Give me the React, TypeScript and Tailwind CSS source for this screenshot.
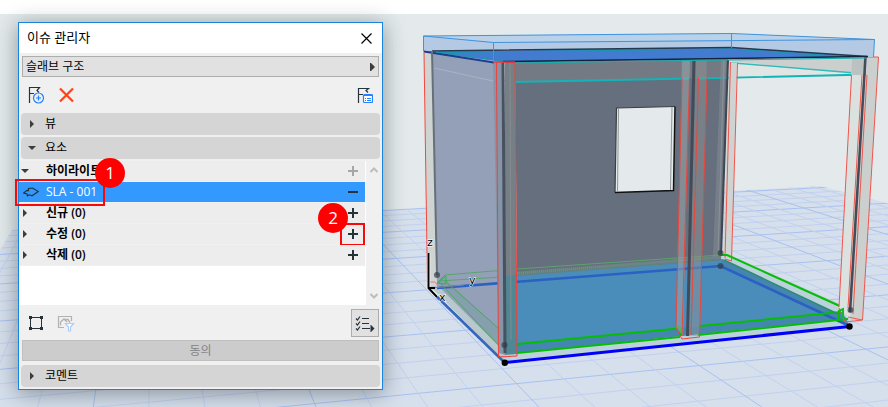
import { ReactNode } from "react";

interface RowProps {
  label: string;
  open?: boolean;
  disabled?: boolean;
  mark?: ReactNode; // callout drawn over the add button
  badge?: ReactNode;
}

const rows = ["신규 (0)", "수정 (0)", "삭제 (0)"];

// lines of the ground plane, both families run to a point on the horizon
const gridColumns = Array.from({ length: 33 }, (_, i) => ({
  x: 149 + (i - 5) * 72.4,
  major: i % 4 === 0,
}));

const gridRows = Array.from({ length: 26 }, (_, n) => {
  const y = 1 / (0.00475 - n * 0.0001115); // height of the line at x = 383
  const slope = y / 4017;
  return { left: y + slope * 583, right: y - slope * 617, major: n % 4 === 0 };
});

function Arrow({ down }: { down?: boolean }) {
  return (
    <svg className="h-2 w-2 fill-[#3c3c3c]" viewBox="0 0 8 8">
      <path d={down ? "M0 2h8L4 6z" : "M2 0l4 4-4 4z"} />
    </svg>
  );
}

function Section({ label, open }: { label: string; open?: boolean }) {
  return (
    <button
      aria-expanded={!!open}
      className="flex h-[22px] w-full items-center gap-[9px] rounded-sm bg-[#d5d5d5] px-[7px] text-left"
    >
      <Arrow down={open} />
      <span className="leading-5">{label}</span>
    </button>
  );
}

function Badge({ children }: { children: ReactNode }) {
  return (
    <span className="flex h-[30px] w-[30px] items-center justify-center rounded-full bg-[#fe0000] text-[17px] font-normal text-white">
      {children}
    </span>
  );
}

function Row({ label, open, disabled, mark, badge }: RowProps) {
  return (
    <li className="relative flex h-[21px] items-center border-b border-[#f0f0f0] bg-[#ededed] pr-[6px] pl-[2px]">
      <button aria-expanded={!!open} className="flex items-center gap-[17px] font-semibold">
        <Arrow down={open} />
        <span>{label}</span>
      </button>
      <button aria-label={`${label} 추가`} disabled={disabled} className="ml-auto">
        <svg className="h-3 w-3" viewBox="0 0 12 12">
          <path d="M1 6h10M6 1v10" stroke={disabled ? "#a3a7aa" : "#26333b"} strokeWidth="2" />
        </svg>
      </button>
      {mark}
      {badge}
    </li>
  );
}

// 3D view behind the palette
function ModelView() {
  return (
    <svg
      className="absolute inset-0 h-full w-full"
      viewBox="0 14 888 393"
      preserveAspectRatio="xMinYMin slice"
      role="img"
      aria-label="3D"
    >
      <clipPath id="ground">
        <polygon points="12,230 820,186 1400,334 1400,600 -208,600" />
      </clipPath>
      <rect y="14" width="888" height="393" fill="#e4eaeb" />
      <g clipPath="url(#ground)">
        <rect x="-210" y="180" width="1610" height="420" fill="#d6dfec" />
        {gridRows.map((r, i) => (
          <line key={i} x1="-200" y1={r.left} x2="1000" y2={r.right} stroke={r.major ? "#a9c1f0" : "#c1d1ee"} />
        ))}
        {gridColumns.map((c, i) => (
          <line key={i} x1="149" y1="0" x2={c.x} y2="529" stroke={c.major ? "#a9c1f0" : "#c1d1ee"} />
        ))}
      </g>

      {/* floor slab */}
      <polygon points="437,288 720,256 728,254 849,308 849,326 505,362" fill="#bcd2db" />
      <polygon points="437,283 505,274 722,259 846,318 505,354" fill="#4a8dbb" />
      <polygon points="517,344 842,312 846,319 517,353" fill="#4486b0" />
      <polygon points="722,259 846,318 849,326 720,266" fill="#4486b0" />

      {/* walls */}
      <polygon points="424,52 432,51 437,284 428,286" fill="#cfd4d2" />
      <polygon points="432,51 504,62 505,354 437,285" fill="#93a0b7" />
      <polygon points="438,281 443,277 516,344 505,354" fill="#7f9ea8" opacity=".7" />
      <polygon points="430,286 437,285 505,352 504,361" fill="#b8c8cd" />
      <polygon points="515,61 728,58 721,260 517,275" fill="#656f7d" />
      <polygon points="515,61 728,58 727,78 515,82" fill="#747a84" />
      <polygon points="517,272 721,256 721,260 517,276" fill="#64817f" />
      <path d="M517 273L721 257" stroke="#8a9298" strokeWidth="3" strokeDasharray="1 1" opacity=".5" />
      <polygon points="616.5,108 675,106.5 673.5,190.5 615,192.5" fill="#e4eaeb" />
      <path d="M615 192.5L616.5 108L675 106.5" fill="none" stroke="#3c3f42" strokeWidth="1.2" />
      <path d="M675 106.5L673.5 190.5L615 192.5" fill="none" stroke="#111" strokeWidth="1.5" />
      <path d="M618.5 108L617.5 192M672 107L670.5 190" stroke="#8f9494" />
      <path d="M434 68L493 81H515" fill="none" stroke="#a9b5c3" />

      {/* beam on the open side */}
      <polygon points="728,59 866,57 866,74.5 728,62" fill="#cbcfce" />
      <polygon points="728,61 866,74 866,76 728,78.5" fill="#e1e6e5" />
      <path d="M728 62.5L867 74" stroke="#35b9b9" strokeWidth="1.6" />
      <path d="M515 82L690 78.5M698.5 78.5L867 74.5" stroke="#10b5b8" strokeWidth="1.8" />

      {/* back right column */}
      <polygon points="721,60 726,60 719,256 713,257" fill="#858d94" opacity=".55" />
      <polygon points="729,62 737,63 731.5,260 723,258" fill="#cfd4d2" />
      <path d="M730.5 62L725 258M737.5 63L731.5 261L725 259" fill="none" stroke="#f2564b" />
      <path d="M728 60L721 256" stroke="#3e4652" strokeWidth="2" />
      <path d="M724 60L718 256" stroke="#8a9298" />

      {/* slab outline */}
      <path d="M437 288L720.5 266L849.5 326" fill="none" stroke="#2a61c3" strokeWidth="2.6" />
      <path d="M429 289L504 362" stroke="#3466bd" strokeWidth="2.6" />
      <path d="M504.5 362.5L849.5 326.5" stroke="#0000fa" strokeWidth="3" />
      <g fill="none" stroke="#06bd06" strokeWidth="2">
        <path d="M517 344L678 328.5M700 326L841 312" />
        <path d="M517 353L680 337M698 335L848 319" />
        <path d="M718 255H727L842 307" />
        <path d="M676 326l4 2v8M839 310v10" />
      </g>
      <path d="M724 260L838 314" stroke="#2f8b73" strokeWidth="1.5" />
      <path d="M517 269L445 275L439 281L517 276M517 269L721 255" fill="none" stroke="#5aa56c" />
      <path d="M438 281L505 352M445 281L515 343" fill="none" stroke="#4fa568" />
      <path d="M437 283l9 -7v8z" fill="none" stroke="#2fb44a" />

      {/* front left column */}
      <polygon points="493,62 503,62 505,355 499,353" fill="#8794a8" />
      <polygon points="505,62 515,62 517,343 505,343" fill="#777f86" />
      <polygon points="505,276 517,275 517,354 505,355" fill="#4f8795" />
      <path d="M503 61L505 353" stroke="#475160" strokeWidth="3" />
      <path d="M510 62L511 340" stroke="#858d91" />
      <path d="M496.5 62L498.5 357L517 356L515 62z" fill="none" stroke="#ef4238" />

      {/* middle column */}
      <polygon points="682,60 690,60 683,336 676,327" fill="#9aa5aa" opacity=".55" />
      <polygon points="696,60 707,60 700,336 688,336" fill="#8d9294" opacity=".5" />
      <path d="M694 59L687.5 336" stroke="#434b58" strokeWidth="3" />
      <path
        d="M682 78L676 327M689.5 78L682 336M698.5 78L691 335M707 78L699.5 337L682 339L676 328M690 60h16"
        fill="none"
        stroke="#e8473e"
      />

      {/* front right column */}
      <polygon points="852,58 865,57 850,320 839,307" fill="#dbe1df" />
      <polygon points="852,58 865,57 864,75 851,75" fill="#bcc2c1" />
      <polygon points="867,57 878.5,57 862.5,320 850,320" fill="#cbd0cf" />
      <path
        d="M851.5 75L839 307M862 75L848 308M867 75L853 314M866 57H878.5L862.5 320L845 322L839 308M848 317L862 320"
        fill="none"
        stroke="#f2564b"
      />
      <path d="M865.5 57L850 312" stroke="#454c59" strokeWidth="2.6" />
      <path d="M839 311l4 -2v9" fill="none" stroke="#12ba2c" strokeWidth="2" />

      {/* roof slab */}
      <polygon points="423.5,36 731.5,33.5 874.5,39.5 873.5,57 493.5,62.5 423.5,51.5" fill="#b4c9e3" />
      <polygon points="423.5,36 731.5,33.5 874.5,39.5 493.5,42.5" fill="#b9d2e9" />
      <polygon points="424,51.5 731,47.5 866,56.5 503,62" fill="#437bd0" />
      <path d="M424 51.5L494 62.5" stroke="#1b3f8f" strokeWidth="2" />
      <path d="M432 51L731 47.5L867 56.5" fill="none" stroke="#26384f" strokeWidth="1.5" />
      <path d="M436 52L503 61M440 52.5L731 49L850 57" fill="none" stroke="#1b97ac" />
      <path d="M503 61.5L868 56.5" stroke="#14233a" strokeWidth="1.5" />
      <path d="M515 63L866 58" stroke="#16afb0" />
      <path
        d="M423.5 51.5V36L731.5 33.5L874.5 39.5L873.5 57M423.5 36L493.5 42.5L874.5 39.5M493.5 42.5V62.5M731.5 33.5V48"
        fill="none"
        stroke="#4093dc"
      />
      <path d="M494 62H515" stroke="#ef2f2f" strokeWidth="1.5" />

      {/* far left column */}
      <path d="M424 52L427.5 286" stroke="#f2473d" />
      <path d="M432 51L437 275" stroke="#66707a" strokeWidth="2" />
      <path d="M428 282h7l3 4" fill="none" stroke="#f07a72" />

      <g fill="#323d48" opacity=".7">
        <circle cx="437" cy="275" r="3" />
        <circle cx="504.5" cy="345" r="3" />
        <circle cx="720.5" cy="253" r="3" />
        <circle cx="720.5" cy="266" r="3" />
        <circle cx="850.5" cy="310" r="3" />
      </g>
      <circle cx="504.8" cy="362.7" r="3.2" />
      <circle cx="849.5" cy="326.5" r="3.2" />

      {/* axes */}
      <path d="M430 288L464 285" stroke="#7d8794" />
      <path d="M428.5 253V288L437 297" fill="none" stroke="#fff" strokeWidth="3.5" />
      <path d="M428.5 253V288L437 297M429 288h6" fill="none" stroke="#000" strokeWidth="2" />
      <g className="font-['DejaVu_Sans',sans-serif] text-[11px] [paint-order:stroke]" stroke="#fff">
        <text x="427" y="246">z</text>
        <text x="469" y="284">y</text>
        <text x="439" y="301">x</text>
      </g>
    </svg>
  );
}

function IssueManager() {
  return (
    <section
      aria-label="이슈 관리자"
      className="relative w-[365px] border border-[#1a84dc] bg-[#f0f0f0] pb-[2px] shadow-[0_3px_20px_1px_rgba(20,35,40,0.4)]"
    >
      <header className="flex h-[30px] items-center justify-between bg-white pr-[10px] pl-2">
        <h1 className="text-[13px]">이슈 관리자</h1>
        <button aria-label="닫기">
          <svg className="h-[11px] w-[11px]" viewBox="0 0 11 11">
            <path d="M.5 .5l10 10M10.5 .5l-10 10" stroke="#000" strokeWidth="1.2" />
          </svg>
        </button>
      </header>

      <div className="px-[3px] pt-[3px]">
        <button
          aria-haspopup="listbox"
          className="flex h-[21px] w-full items-center justify-between border border-[#adadad] bg-[#e1e1e1] px-[3px]"
        >
          <span>슬래브 구조</span>
          <svg className="h-2 w-2 fill-[#3c3c3c]" viewBox="0 0 8 8">
            <path d="M3 0h1l4 4-4 4H3z" />
          </svg>
        </button>
      </div>

      <div className="flex h-9 items-center px-[9px]">
        <button aria-label="새 이슈">
          <svg className="h-[18px] w-[18px]" viewBox="0 0 18 18" fill="none">
            <path d="M1.5 17V1.5H11.5L9 4.5L11 6.5M1.5 7.5H6" stroke="#26333b" strokeWidth="1.2" />
            <circle cx="10.5" cy="12" r="5" stroke="#2380ff" strokeWidth="1.2" />
            <path d="M10.5 9.5v5M8 12h5" stroke="#2380ff" strokeWidth="1.2" />
          </svg>
        </button>
        <button aria-label="삭제" className="ml-3">
          <svg className="h-[18px] w-[18px]" viewBox="0 0 18 18">
            <path d="M2 2.5l13 13M15 2.5l-13 13" stroke="#ff4218" strokeWidth="2.2" />
          </svg>
        </button>
        <button aria-label="이슈 세부사항" className="ml-auto">
          <svg className="h-[18px] w-[18px]" viewBox="0 0 18 18" fill="none">
            <path d="M3.5 17V2.5H13.5L11 4.5L13 6.5M3.5 8.5H8" stroke="#26333b" strokeWidth="1.2" />
            <rect x="8.5" y="8.5" width="9" height="8" rx="1" fill="#fff" stroke="#2380ff" strokeWidth="1.2" />
            <path d="M8.5 9.5h9M10 12.5h1M12 12.5h4M10 14.5h1M12 14.5h4" stroke="#2380ff" />
          </svg>
        </button>
      </div>

      <div className="flex flex-col gap-[2px] px-[2px]">
        <Section label="뷰" />
        <Section label="요소" open />
      </div>

      <div className="mt-[2px] flex h-36">
        <ul className="flex-1 border-r border-white bg-white">
          <Row
            label="하이라이트"
            open
            disabled
            badge={
              <div className="absolute top-[-3px] left-[76px] z-20">
                <Badge>1</Badge>
              </div>
            }
          />
          <li className="relative flex h-[21px] items-center border-b border-[#f0f0f0] bg-[#3399ff] pr-[6px] pl-1 text-white">
            <svg className="h-[10px] w-4" viewBox="0 0 16 10" fill="none">
              <path
                d="M.7 6L4 3.3L5.5 3.5L5.5 1.5L9.5 1L15.3 4.5L9 8.8L6.5 7.8L4.5 8.8L4 7z"
                stroke="#26333b"
                strokeWidth="1.2"
              />
            </svg>
            <span className="ml-[7px]">SLA - 001</span>
            <button aria-label="SLA - 001 제거" className="ml-auto">
              <svg className="h-3 w-3" viewBox="0 0 12 12">
                <path d="M1 6h10" stroke="#26333b" strokeWidth="2" />
              </svg>
            </button>
            <div className="absolute top-[-3px] left-[-4px] z-10 h-[27px] w-[90px] border-2 border-[#f80a0a]" />
          </li>
          {rows.map((label, i) => (
            <Row
              key={label}
              label={label}
              mark={
                i === 1 && <div className="absolute -top-px right-0 h-[23px] w-[25px] border-2 border-[#f80a0a]" />
              }
              badge={
                i === 1 && (
                  <div className="absolute right-[17px] bottom-[11px] z-10">
                    <Badge>2</Badge>
                  </div>
                )
              }
            />
          ))}
        </ul>
        <div className="flex w-4 flex-col items-center justify-between py-[5px]">
          <svg className="h-2 w-2" viewBox="0 0 8 8">
            <path d="M.5 6L4 2.5L7.5 6" fill="none" stroke="#bdbdbd" strokeWidth="2" />
          </svg>
          <svg className="h-2 w-2" viewBox="0 0 8 8">
            <path d="M.5 2L4 5.5L7.5 2" fill="none" stroke="#bdbdbd" strokeWidth="2" />
          </svg>
        </div>
      </div>

      <div className="flex h-[35px] items-center pr-[3px] pl-[9px]">
        <button aria-label="요소 선택">
          <svg className="h-4 w-4" viewBox="0 0 16 16">
            <path d="M2.5 2.5h11v11h-11z" fill="none" stroke="#26333b" />
            <path d="M1 1h3v3H1zM12 1h3v3h-3zM1 12h3v3H1zM12 12h3v3h-3z" fill="#26333b" />
          </svg>
        </button>
        <button aria-label="필터" disabled className="ml-[13px]">
          <svg className="h-[18px] w-[18px]" viewBox="0 0 18 18" fill="none">
            <path d="M7 13.5H1.5V2.5H14.5V7" stroke="#b0b3b5" strokeWidth="1.2" />
            <path d="M3.5 11.5V8L7 5L10 8M7 5.5h4l2 3" stroke="#b0b3b5" strokeWidth="1.4" />
            <path d="M8.5 9.5h8l-3 3.5v4h-2v-4z" fill="#fff" stroke="#a9cdfb" strokeWidth="1.2" />
          </svg>
        </button>
        <button
          aria-label="보기 옵션"
          className="ml-auto flex h-7 w-7 items-center justify-center border border-[#adadad] bg-[#e1e1e1]"
        >
          <svg className="h-5 w-5" viewBox="0 0 20 20" fill="none" stroke="#26333b" strokeWidth="1.2">
            <path d="M7 5.5h7M7 10.5h7M7 15.5h8" />
            <path d="M1 5.5l1.5 1.5L5 3.5M1 10.5l1.5 1.5L5 8.5M1 15.5l1.5 1.5L5 13.5" />
            <path d="M15.5 12v7h.5l3.5-3.5L16 12z" fill="#26333b" stroke="none" />
          </svg>
        </button>
      </div>

      <div className="px-[3px]">
        <button disabled className="h-[21px] w-full border border-[#bfbfbf] bg-[#cccccc] text-[#838383]">
          <span className="block leading-[18px]">동의</span>
        </button>
      </div>
      <div className="mt-1 px-[2px]">
        <Section label="코멘트" />
      </div>
    </section>
  );
}

export default function App() {
  return (
    <main className="flex min-h-screen flex-col bg-white pt-[14px] font-['Open_Sans','Noto_Sans_CJK_KR',sans-serif] text-xs text-black">
      <div className="relative flex-1">
        <ModelView />
        <div className="px-[18px] pt-2 pb-4">
          <IssueManager />
        </div>
      </div>
    </main>
  );
}
